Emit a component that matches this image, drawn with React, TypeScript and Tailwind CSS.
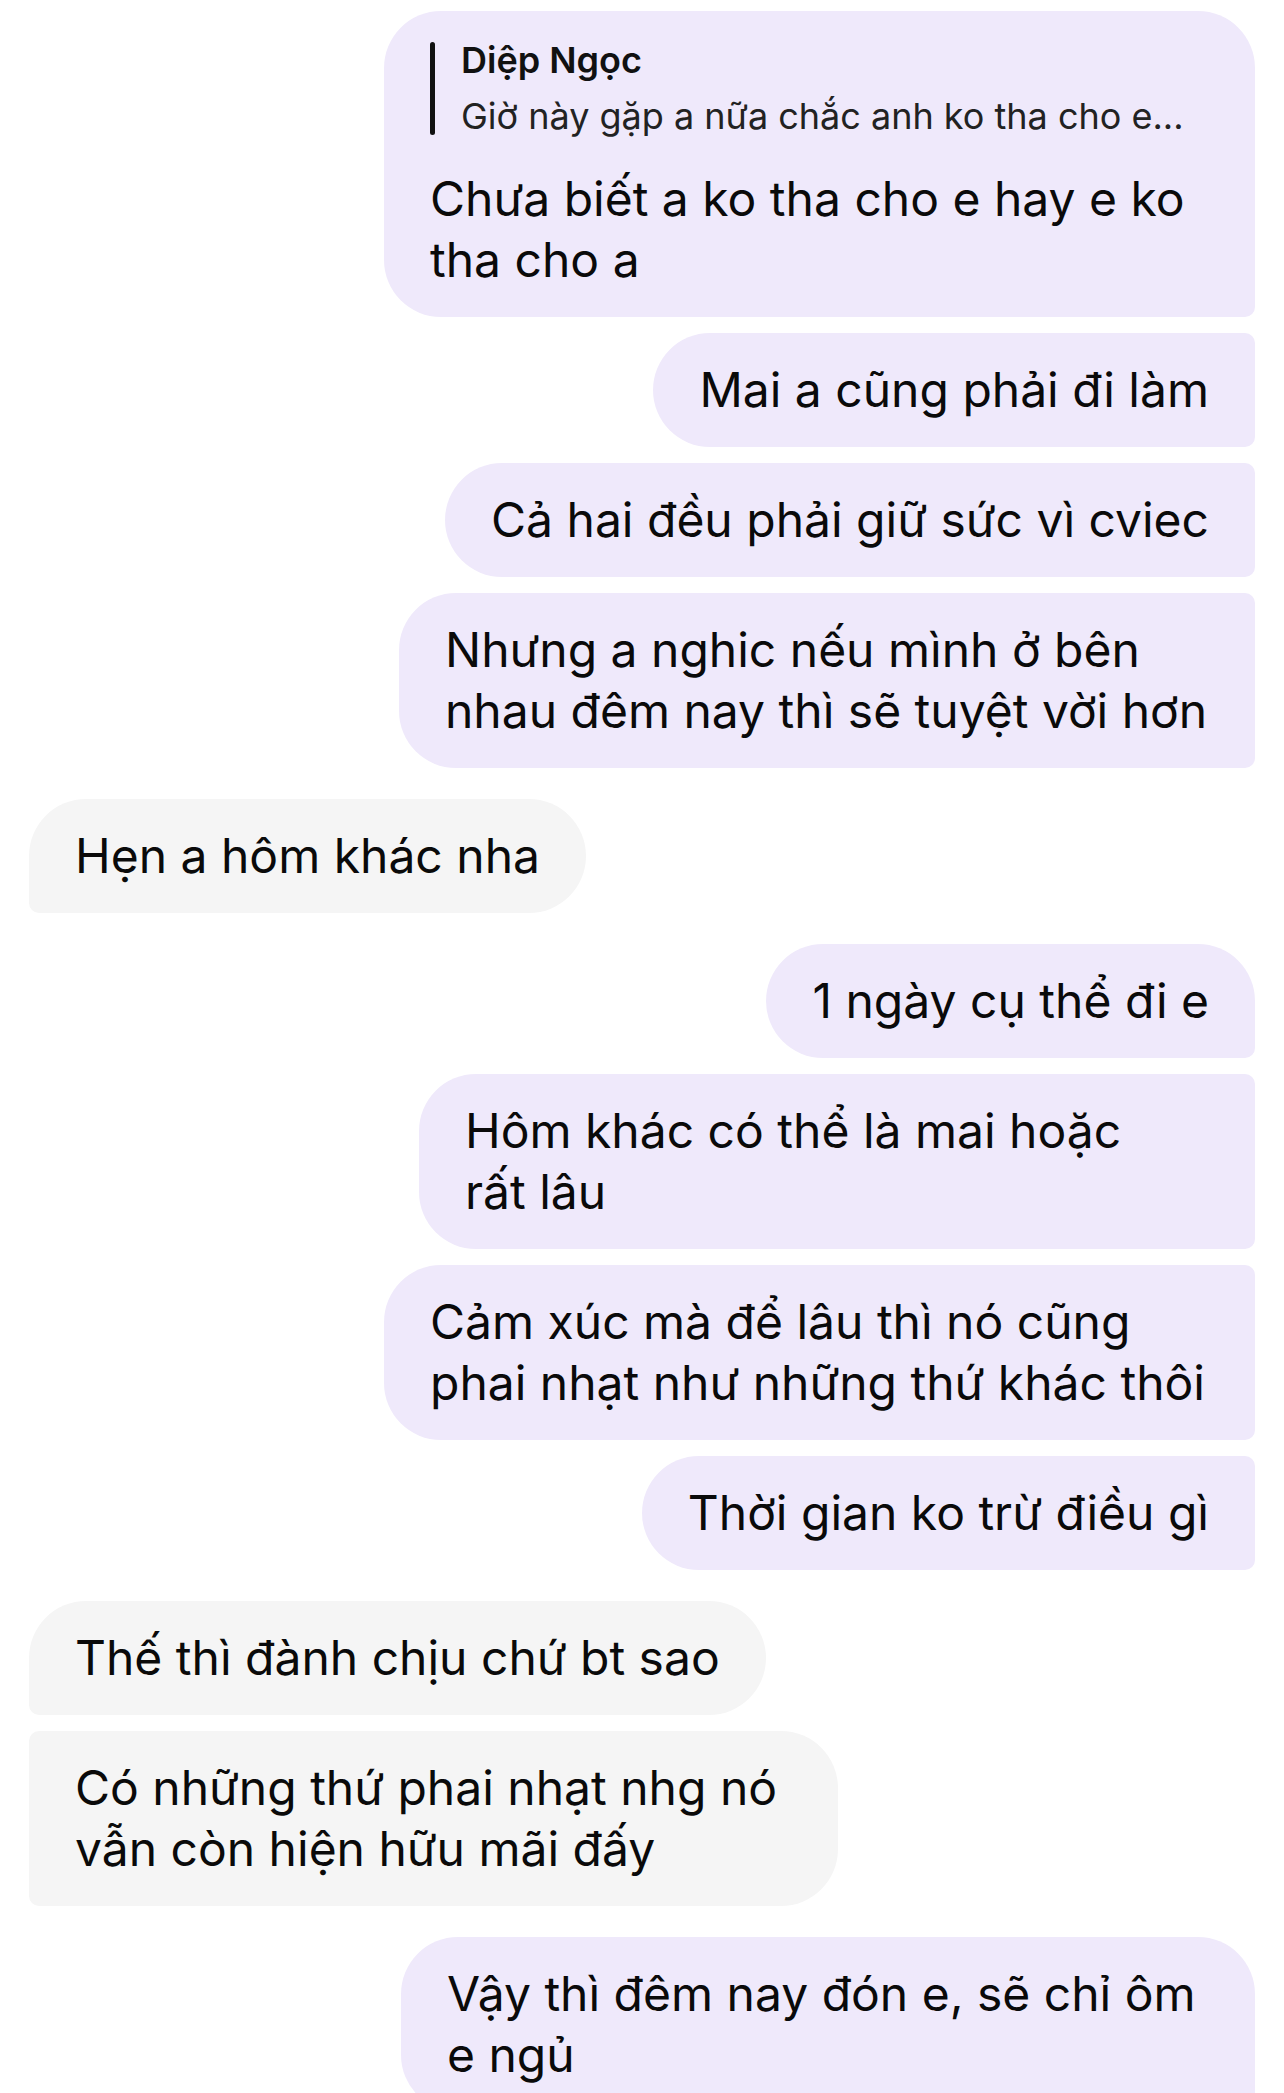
import React from "react";

type Msg = {
  side: "me" | "them";
  lines: string[];
  radius: string;
  mt: string;
  w?: string;
};

const msgs: Msg[] = [
  { side: "me", lines: ["Mai a cũng phải đi làm"], radius: "rounded-tl-[57px] rounded-bl-[57px] rounded-tr-[10px] rounded-br-[10px]", mt: "mt-[16px]" },
  { side: "me", lines: ["Cả hai đều phải giữ sức vì cviec"], radius: "rounded-tl-[57px] rounded-bl-[57px] rounded-tr-[10px] rounded-br-[10px]", mt: "mt-[16px]" },
  { side: "me", lines: ["Nhưng a nghic nếu mình ở bên", "nhau đêm nay thì sẽ tuyệt vời hơn"], radius: "rounded-tl-[57px] rounded-bl-[57px] rounded-tr-[10px] rounded-br-[10px]", mt: "mt-[16px]", w: "w-[856px]" },
  { side: "them", lines: ["Hẹn a hôm khác nha"], radius: "rounded-tl-[57px] rounded-bl-[10px] rounded-tr-[57px] rounded-br-[57px]", mt: "mt-[31px]" },
  { side: "me", lines: ["1 ngày cụ thể đi e"], radius: "rounded-tl-[57px] rounded-bl-[57px] rounded-tr-[57px] rounded-br-[10px]", mt: "mt-[31px]" },
  { side: "me", lines: ["Hôm khác có thể là mai hoặc", "rất lâu"], radius: "rounded-tl-[57px] rounded-bl-[57px] rounded-tr-[10px] rounded-br-[10px]", mt: "mt-[16px]", w: "w-[836px]" },
  { side: "me", lines: ["Cảm xúc mà để lâu thì nó cũng", "phai nhạt như những thứ khác thôi"], radius: "rounded-tl-[57px] rounded-bl-[57px] rounded-tr-[10px] rounded-br-[10px]", mt: "mt-[16px]", w: "w-[871px]" },
  { side: "me", lines: ["Thời gian ko trừ điều gì"], radius: "rounded-tl-[57px] rounded-bl-[57px] rounded-tr-[10px] rounded-br-[10px]", mt: "mt-[16px]" },
  { side: "them", lines: ["Thế thì đành chịu chứ bt sao"], radius: "rounded-tl-[57px] rounded-bl-[10px] rounded-tr-[57px] rounded-br-[57px]", mt: "mt-[31px]" },
  { side: "them", lines: ["Có những thứ phai nhạt nhg nó", "vẫn còn hiện hữu mãi đấy"], radius: "rounded-tl-[10px] rounded-bl-[10px] rounded-tr-[57px] rounded-br-[57px]", mt: "mt-[16px]", w: "w-[809px]" },
  { side: "me", lines: ["Vậy thì đêm nay đón e, sẽ chỉ ôm", "e ngủ"], radius: "rounded-tl-[57px] rounded-bl-[57px] rounded-tr-[57px] rounded-br-[10px]", mt: "mt-[31px]", w: "w-[854px]" },
];

function Bubble({ m }: { m: Msg }) {
  const me = m.side === "me";
  return (
    <div className={`flex ${me ? "justify-end" : "justify-start"} ${m.mt}`}>
      <div
        className={`${me ? "bg-[#efe9fb]" : "bg-[#f5f5f5]"} ${m.radius} ${m.w ?? ""} px-[46px] py-[26.5px] text-[48px] leading-[61px] text-[#0a0a0a] whitespace-nowrap`}
      >
        {m.lines.map((l, i) => (
          <div key={i}>{l}</div>
        ))}
      </div>
    </div>
  );
}

export default function App() {
  return (
    <div
      className="w-[1284px] h-[2093px] overflow-hidden bg-white px-[29px] pt-[11px]"
      style={{ fontFamily: "Inter, 'Noto Sans', sans-serif" }}
    >
      <div className="flex justify-end">
        <div className="w-[871px] bg-[#efe9fb] rounded-tl-[57px] rounded-tr-[57px] rounded-bl-[57px] rounded-br-[10px] px-[46px] pt-[31px] pb-[26.5px] whitespace-nowrap">
          <div className="flex">
            <div className="w-[5px] rounded-full bg-[#111111]" />
            <div className="pl-[26px]">
              <div className="text-[36px] leading-[36px] font-semibold text-[#111111]">Diệp Ngọc</div>
              <div className="mt-[19px] text-[36px] leading-[38px] text-[#222222]">
                Giờ này gặp a nữa chắc anh ko tha cho e...
              </div>
            </div>
          </div>
          <div className="mt-[33px] text-[48px] leading-[61px] text-[#0a0a0a]">
            <div>Chưa biết a ko tha cho e hay e ko</div>
            <div>tha cho a</div>
          </div>
        </div>
      </div>
      {msgs.map((m, i) => (
        <Bubble key={i} m={m} />
      ))}
    </div>
  );
}
